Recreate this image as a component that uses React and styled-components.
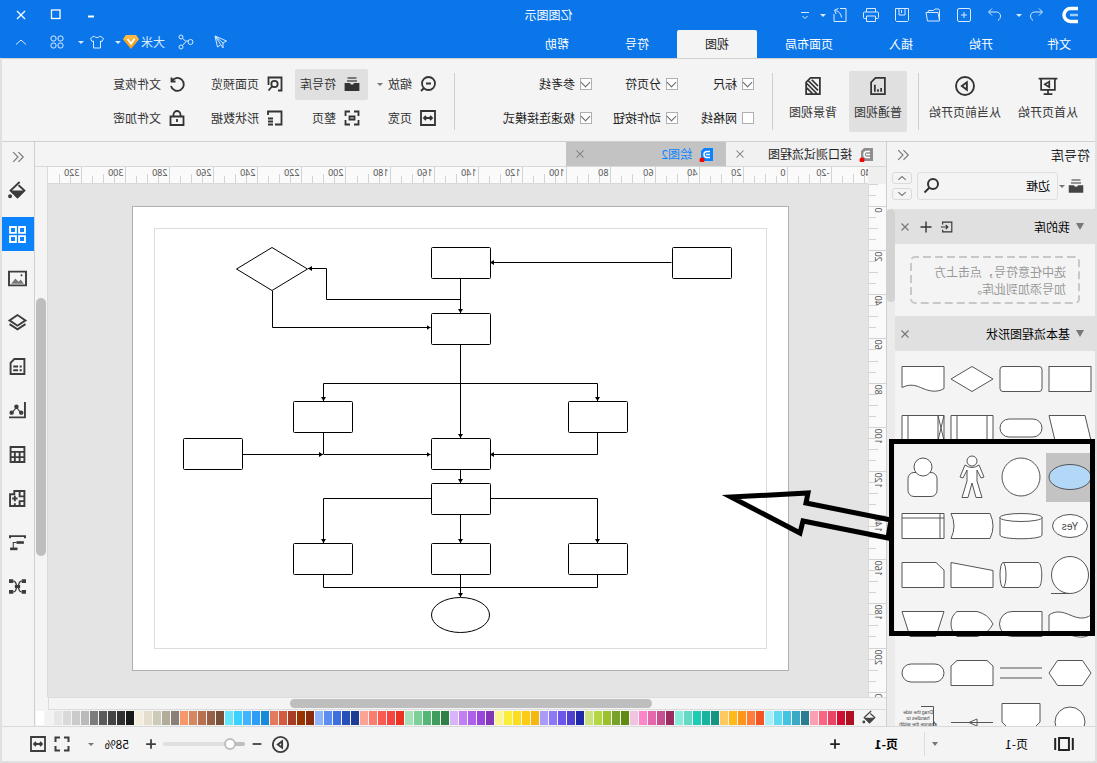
// react
import React from 'react';
// styled-components
import styled, { createGlobalStyle, css } from 'styled-components';

const GlobalStyle = createGlobalStyle`
  * {
    box-sizing: border-box;
  }
  body {
    margin: 0;
    overflow: hidden;
    background: #f4f4f4;
  }
  body, button, input, select {
    font-family: 'Liberation Sans', 'Noto Sans CJK SC', sans-serif;
    font-size: 12px;
    line-height: 16px;
    color: #222;
  }
  button {
    padding: 0;
    border: 0;
    background: none;
    cursor: pointer;
  }
`;

/* ---------- shell ---------- */

// the whole window is shown reversed left to right
const Window = styled.div`
  display: flex;
  flex-direction: column;
  width: 100%;
  height: 100vh;
  transform: scaleX(-1);
  font-family: 'Noto Sans CJK SC', sans-serif;
  button, input, select {
    font-family: 'Noto Sans CJK SC', sans-serif;
  }
`;

const Frame = styled.div`
  display: flex;
  flex-direction: column;
  flex: 1;
  min-height: 0;
  border: 2px solid #e0e0e0;
  border-top: 0;
  background: #f4f4f4;
`;

const Main = styled.main`
  display: flex;
  flex: 1;
  min-height: 0;
`;

/* ---------- icons ---------- */

const Svg = styled.svg`
  display: block;
  flex: none;
  fill: none;
  stroke: currentColor;
  stroke-width: ${p => p.$weight};
`;

const icons = {
  undo: <path d="M5 1.5L1.5 5 5 8.500M2 5H9.500C12 5 13.500 7 13.500 9S12.500 12.500 11 13.500" />,
  redo: <path d="M11 1.500L14.500 5 11 8.500M14 5H6.500C4 5 2.500 7 2.500 9S3.500 12.500 5 13.500" />,
  add: <path d="M3 1.500H13A1.500 1.500 0 0 1 14.500 3V13A1.500 1.500 0 0 1 13 14.500H3A1.500 1.500 0 0 1 1.500 13V3A1.500 1.500 0 0 1 3 1.500ZM8 5V11M5 8H11" />,
  open: <path d="M1.500 14V3.500Q1.500 2 3 2H6L7.500 3.500H12Q13 3.500 13 5M1.500 13.500L3 5.500H15L13.500 14H2Q1.500 14 1.500 13.500Z" />,
  save: <path d="M1.500 1.500H14.500V13.500L13.500 14.500H2.500L1.500 13.500ZM5 1.500V8H11V1.500M8.500 3V6" />,
  print: <path d="M3.500 5V1.500H12.500V5M3.500 11.500H1.500Q.5 11.500.5 10.500V6Q.5 5 1.500 5H14.500Q15.500 5 15.500 6V10.500Q15.500 11.500 14.500 11.500H12.500M3.500 9H12.500V14.500H3.500Z" />,
  export: <path d="M8 1.500H2V14.500H14V7M6.500 10.500Q7 5 12.500 3.500M9.500 1.500L13.500 3 12 7" />,
  more: <path d="M4 5.500H12M5.500 9L8 11.500 10.500 9" />,
  send: <path d="M14 2L2.500 7 6 9 14 2 11.500 13 8.500 11M6 9V14L14 2" />,
  share: <g><circle cx="3.500" cy="8" r="2.500" /><circle cx="13" cy="3" r="2" /><circle cx="13" cy="13" r="2" /><path d="M6 7H8.500L11.500 4.500M8 7.500L11.500 11.500" /></g>,
  shirt: <path d="M5 2L1.500 4.500 3 7.500 4.500 7V14H11.500V7L13 7.500 14.500 4.500 11 2C10 4 6 4 5 2Z" />,
  apps: <g><rect x="2" y="2" width="5" height="5" rx="2" /><rect x="9" y="2" width="5" height="5" rx="2" /><rect x="2" y="9" width="5" height="5" rx="2" /><rect x="9" y="9" width="5" height="5" rx="2" /></g>,
  up: <path d="M3 10.500L8 6 13 10.500" />,
  down: <path d="M3 5.500L8 10 13 5.500" />,
  min: <path d="M5 9.500H11" strokeWidth="2" />,
  max: <rect x="4" y="3" width="8.500" height="8.500" />,
  close: <path d="M4 4L12 12M12 4L4 12" />,
  present: <path d="M.5 2H15.500M2.500 2V11H13.500V2M8 11V14M4.500 14.500H11.500M7 4.500L10.500 6.700 7 9Z" />,
  play: <g><circle cx="8" cy="8" r="7.200" /><path d="M6.500 5L10.500 8 6.500 11Z" /></g>,
  chartPage: <path d="M2.500 1.500H10L13.500 5V14.500H2.500ZM5.500 12.500V9.500M8 12.500V10.500M10.500 12.500V7" />,
  hatchPage: <path d="M2.500 1.500H10L13.500 5V14.500H2.500ZM4 8L9 3M4 11.500L11.500 4M5 14L13 6M8.500 14L13 9.500" />,
  zoom: <g><circle cx="7.500" cy="7.500" r="6.500" /><path d="M12 12L15 15M5 7.500H10" /></g>,
  fit: <path d="M1 1H15V15H1ZM4 8H12M6 6L4 8 6 10M10 6L12 8 10 10" />,
  inbox: <g><path d="M3.500 2H12.500M3 5H13" stroke="#777" /><path d="M1.500 8H5.500Q6 9.500 8 9.500T10.500 8H14.500V14H1.500Z" fill="currentColor" /></g>,
  whole: <path d="M6 1.500H1.500V6M10 1.500H14.500V6M1.500 10V14.500H6M14.500 10V14.500H10M5.500 6.500H10.500V9.500H5.500Z" />,
  preview: <g><circle cx="8.500" cy="8" r="3.200" /><path d="M11 10.500L14.500 14.500M5 14.500H1.500V1.500H14.500V9" /></g>,
  data: <path d="M1.500 9V1.500H15V5M1.500 8V14.500H8M10 8.500H15M10 11.500H15M10 14.500H15" />,
  restore: <path d="M13.500 1.500V5.500H9.500M13.500 5.500A6.500 6.500 0 1 0 14 10" />,
  lock: <path d="M1.500 6.500H14.500V15H1.500ZM4.500 6.500V4.500A3.500 3.500 0 0 1 11.500 4.500V6.500M8 9V12" />,
  search: <g><circle cx="7" cy="6" r="5" /><path d="M10.500 9.500L15.500 14.500" /></g>,
  import: <path d="M3 5V2.500H13.500V13.500H3V11M1 8H9M6.500 5.500L9 8 6.500 10.500" transform="matrix(-1 0 0 1 16 0)" />,
  plus: <path d="M8 2.500V13.500M2.500 8H13.500" />,
  minus: <path d="M3 8H13" />,
  collapse: <path d="M7.500 2.500L2 8 7.500 13.500M13.500 2.500L8 8 13.500 13.500" />,
  bucket: <g><path d="M7 3L1.500 8 8 14.500 14.500 8 6 0" /><path d="M3 9L8 14 13 9Z" fill="currentColor" /><circle cx="15" cy="13.500" r="1" fill="currentColor" /></g>,
  grid: <path d="M1 1H6.500V6.500H1ZM9.500 1H15V6.500H9.500ZM1 9.500H6.500V15H1ZM9.500 9.500H15V15H9.500Z" />,
  image: <g><path d="M0 1.500H16V14.500H0Z" /><path d="M2 13L5 9 7 11 10 8 14 13Z" fill="#777" stroke="none" /><path d="M3.500 5H5" /></g>,
  layers: <path d="M8 1L15.500 6 8 11 .5 6ZM.5 9.500L8 14.500 15.500 9.500" />,
  doc: <path d="M1.500 1H11L14.500 4.500V15H1.500ZM4 8H6M7.500 8H12M4 11.500H6M7.500 11.500H12" />,
  chart: <g><path d="M1 0V14.500H16" /><path d="M5 10L9 5 13 10" strokeWidth="1" /><circle cx="4.500" cy="10" r="1.200" fill="currentColor" /><circle cx="9" cy="4.500" r="1.200" fill="currentColor" /><circle cx="13.500" cy="10" r="1.200" fill="currentColor" /></g>,
  table: <path d="M1.500 1H14.500V15H1.500ZM1.500 5.500H14.500M1.500 10.500H14.500M6 5.500V15M10.500 5.500V15" />,
  plan: <path d="M1.500 1H11V4H15V15H1.500ZM1.500 6H6V1M10.500 5.500V10.500M8 8H13M1.500 10.500H6V15M10.500 15V12.500" />,
  gantt: <g><path d="M0 2H16M1 2V4M15 2V4" /><path d="M2 8H9" strokeWidth="2.500" /><path d="M8 14H15" strokeWidth="2.500" /><path d="M9 8H12V14" strokeWidth="1" /></g>,
  mind: <g><path d="M4 3C8 3 6 8 8 8S8 13 12 13M12 3C8 3 10 8 8 8S8 13 4 13" strokeWidth="1.200" /><path d="M0 3H4M12 3H16M0 13H4M12 13H16" strokeWidth="3.500" /><path d="M5.500 8H10.500" strokeWidth="3" /></g>,
  pages: <path d="M4.500 2.500H13.500V13.500H4.500ZM1 2.500V13.500M17 2.500V13.500" />,
  full: <path d="M6 1.500H1.500V6M10 1.500H14.500V6M1.500 10V14.500H6M14.500 10V14.500H10" />
};

const Icon = ({ name, size = 16, weight = 1, wide }) => (
  <Svg
    width={wide ? size + 4 : size}
    height={size}
    viewBox={wide ? '-1 0 20 16' : '0 0 16 16'}
    $weight={weight}
    overflow="visible"
    aria-hidden="true"
  >
    {icons[name]}
  </Svg>
);

const Caret = styled.i`
  display: block;
  flex: none;
  width: 0;
  height: 0;
  border: 3px solid transparent;
  border-top-color: ${p => p.$color || '#777'};
  border-bottom: 0;
`;

/* ---------- title bar ---------- */

const Header = styled.header`
  flex: none;
  height: 58px;
  background: #0a76ea;
  color: #fff;
`;

const TitleRow = styled.div`
  display: grid;
  grid-template-columns: 1fr auto 1fr;
  align-items: center;
  height: 30px;
  padding: 0 13px;
`;

const Title = styled.h1`
  margin: 0;
  font-size: 12px;
  font-weight: 400;
`;

const QuickBar = styled.div`
  display: flex;
  align-items: center;
  gap: 15px;
  padding-left: 5px;
`;

const QuickButton = styled.button`
  display: flex;
  align-items: center;
  gap: 6px;
  margin-right: ${p => (p.$tight ? `-${p.$tight}px` : '0')};
  color: #d9eaff;
`;

const WindowButtons = styled.div`
  display: flex;
  justify-content: flex-end;
  gap: 19px;
  button {
    color: #fff;
  }
`;

const MenuRow = styled.div`
  display: flex;
  justify-content: space-between;
  height: 28px;
`;

const Menu = styled.nav`
  display: flex;
`;

const MenuTab = styled.button`
  padding: 0 ${p => (p.$first ? '26px' : '28px')};
  border-radius: 2px 2px 0 0;
  color: ${p => (p.$active ? '#222' : '#fff')};
  background: ${p => (p.$active ? '#f4f4f4' : 'transparent')};
`;

const AccountBar = styled.div`
  display: flex;
  align-items: center;
  padding: 0 13px 4px 0;
  button {
    display: flex;
    align-items: center;
    color: #d9eaff;
  }
`;

const AccountButton = styled.button`
  gap: ${p => p.$gap || 5}px;
  margin-left: ${p => p.$space}px;
`;

const Logo = () => (
  <svg width="20" height="18" viewBox="0 0 20 18" fill="none" aria-hidden="true">
    <path d="M1 2.500H8.500A6.500 6.500 0 0 1 8.500 15.500H1" stroke="#fff" strokeWidth="3.500" />
    <path d="M1 9H9" stroke="#9fccff" strokeWidth="2.500" />
  </svg>
);

const Gem = () => (
  <svg width="16" height="14" viewBox="0 0 16 14" fill="none" aria-hidden="true">
    <path d="M3 0H13L16 4.500 8 14 0 4.500Z" fill="#f5a623" />
    <path d="M3 0H13L16 4.500H0Z" fill="#fbb945" />
    <path d="M4.500 4L8 8.500 11.500 4" stroke="#fff" strokeWidth="2" />
  </svg>
);

/* ---------- ribbon ---------- */

const Ribbon = styled.section`
  display: flex;
  flex: none;
  align-items: center;
  height: 84px;
  padding: 2px 0 0 12px;
  border-top: 1px solid #d0d0d0;
  border-bottom: 1px solid #d0d0d0;
`;

const Divider = styled.div`
  width: 1px;
  height: 57px;
  margin: 0 ${p => p.$right}px 0 ${p => p.$left}px;
  background: #cfcfcf;
`;

const BigGroup = styled.div`
  display: flex;
  gap: 7px;
`;

const BigButton = styled.button`
  display: flex;
  flex-direction: column;
  align-items: center;
  gap: 8px;
  height: 61px;
  padding: 5px 5px 0;
  border-radius: 2px;
  white-space: nowrap;
  color: #333;
  background: ${p => (p.$active ? '#e0e0e0' : 'transparent')};
`;

const CheckGrid = styled.div`
  display: grid;
  grid-template-columns: 76px 86px 136px;
  grid-auto-rows: 31px;
  gap: 3px 0;
`;

const CheckLabel = styled.label`
  display: flex;
  align-items: center;
  gap: 5px;
`;

const CheckBox = styled.input.attrs({ type: 'checkbox' })`
  appearance: none;
  display: flex;
  justify-content: center;
  width: 12px;
  height: 12px;
  margin: 0;
  border: 1px solid #b0b0b0;
  background: #fff;
  &:checked::after {
    content: '';
    width: 6px;
    height: 6px;
    border: solid #666;
    border-width: 0 1px 1px 0;
    transform: rotate(45deg);
  }
`;

const ToolGrid = styled.div`
  display: grid;
  grid-template-columns: 76px 77px 98px auto;
  grid-auto-rows: 31px;
  gap: 3px 0;
  justify-items: start;
`;

const ToolButton = styled.button`
  display: flex;
  align-items: center;
  gap: 8px;
  padding: 0 5px 0 8px;
  border-radius: 2px;
  white-space: nowrap;
  color: #333;
  background: ${p => (p.$active ? '#e0e0e0' : 'transparent')};
  i {
    margin-left: -3px;
  }
`;

const checks = [
  ['标尺', true], ['分页符', true], ['参考线', true],
  ['网格线', false], ['动作按钮', true], ['极速连接模式', true]
];

const tools = [
  ['zoom', '缩放'], ['inbox', '符号库'], ['preview', '页面预览'], ['restore', '文件恢复'],
  ['fit', '页宽'], ['whole', '整页'], ['data', '形状数据'], ['lock', '文件加密']
];

/* ---------- symbol panel ---------- */

const Panel = styled.aside`
  position: relative;
  display: flex;
  flex: none;
  flex-direction: column;
  width: 209px;
  border-right: 1px solid #cfcfcf;
`;

const PanelHead = styled.div`
  display: flex;
  flex: none;
  align-items: center;
  justify-content: space-between;
  height: 25px;
  padding: 0 9px 0 5px;
  font-size: 13px;
  button {
    color: #777;
  }
`;

const SearchRow = styled.div`
  display: flex;
  flex: none;
  align-items: center;
  height: 28px;
  margin: 5px 5px 9px 11px;
`;

const SearchBox = styled.label`
  display: flex;
  flex: 1;
  align-items: center;
  height: 28px;
  margin: 0 5px 0 1px;
  padding: 0 6px 0 7px;
  border: 1px solid #dedede;
  border-radius: 3px;
  color: #333;
  input {
    flex: 1;
    width: 60px;
    padding: 0;
    border: 0;
    outline: 0;
    background: none;
    color: #000;
  }
`;

const LibraryButton = styled.button`
  display: flex;
  align-items: center;
  gap: 3px;
  color: #444;
`;

const Stepper = styled.div`
  display: grid;
  gap: 4px;
  button {
    display: flex;
    align-items: center;
    justify-content: center;
    width: 20px;
    height: 12px;
    border: 1px solid #dadada;
    border-radius: 3px;
    color: #777;
  }
`;

const PanelBody = styled.div`
  display: flex;
  flex: 1;
  min-height: 0;
`;

const PanelContent = styled.div`
  flex: 1;
  overflow: hidden;
`;

const PanelTrack = styled.div`
  width: 8px;
  background: #ebebeb;
  &::before {
    content: '';
    display: block;
    height: 18%;
    border-radius: 4px;
    background: #d3d3d3;
  }
`;

const SectionHead = styled.div`
  display: flex;
  align-items: center;
  gap: 6px;
  height: 35px;
  padding: 0 3px 0 11px;
  background: #e0e0e0;
  h2 {
    flex: 1;
    margin: 0;
    font-size: 12px;
    font-weight: 400;
    color: #000;
  }
`;

const SectionCaret = styled(Caret)`
  border-width: 7px 4px 0;
`;

const SectionButton = styled.button`
  color: ${p => p.$color};
`;

const DropZone = styled.p`
  display: flex;
  align-items: center;
  height: 48px;
  margin: 12px 15px;
  color: #999;
  line-height: 17px;
  position: relative;
  span {
    padding: 0 14px;
  }
  svg {
    position: absolute;
    inset: 0;
  }
`;

const ShapeGrid = styled.div`
  display: grid;
  grid-template-columns: repeat(4, 49px);
  padding-top: 4px;
`;

const ShapeButton = styled.button`
  width: 49px;
  height: 49px;
  background: ${p => (p.$active ? '#c3c3c3' : 'transparent')};
  svg {
    display: block;
    fill: ${p => (p.$active ? '#b3d7f7' : '#fff')};
    stroke: #555;
  }
  text {
    fill: #444;
    stroke: none;
    text-anchor: middle;
    font-family: 'Liberation Sans', sans-serif;
    font-size: ${p => p.$font || 10}px;
  }
`;

const Marker = styled.svg`
  position: absolute;
  z-index: 2;
  top: 297px;
  left: 0;
  overflow: visible;
  pointer-events: none;
  fill: none;
  stroke: #000;
  stroke-width: 5;
`;

const shapes = [
  ['process', <rect x="-21" y="-12.500" width="42" height="25" />],
  ['rounded process', <rect x="-21" y="-12.500" width="42" height="25" rx="3" />],
  ['decision', <path d="M0-12.500L21 0 0 12.500-21 0Z" />],
  ['document', <path d="M-21-12.500H21V8.500C12 4 6 7 0 9.500S-14 14-21 9.500Z" />],
  ['data', <path d="M-15-12.500H21L15 12.500H-21Z" />],
  ['terminator', <rect x="-21" y="-9" width="42" height="18" rx="9" />],
  ['predefined process', <path d="M-21-12.500H21V12.500H-21ZM-15-12.500V12.500M15-12.500V12.500" />],
  ['crossed process', <path d="M-21-12.500H21V12.500H-21ZM-15-12.500V12.500M15-12.500V12.500M-21-12.500L-15 12.500M-15-12.500L-21 12.500" />],
  ['ellipse', <ellipse rx="21" ry="12.500" />],
  ['circle', <circle r="19" />],
  ['person', <g><circle cy="-16" r="5" /><path d="M-7-12Q0-7 7-12L12 0 9 1 5-7V4L10 20.500H4L0 6-4 20.500H-10L-5 4V-7L-9 1-12 0Z" /></g>],
  ['user', <g><rect x="-14" y="-4.500" width="29" height="24" rx="6" /><circle cy="-10" r="9" /></g>],
  ['yes', <g><ellipse rx="17.500" ry="11.500" /><text y="4">Yes</text></g>],
  ['database', <g><path d="M-21-9V9C-21 14 21 14 21 9V-9" /><ellipse cy="-8.500" rx="21" ry="4" /></g>],
  ['stored data', <path d="M-18-12.500H21Q15 0 21 12.500H-18Q-24 0-18-12.500Z" />],
  ['internal storage', <path d="M-21-12.500H21V12.500H-21ZM-17-12.500V12.500M-21-8H21" />],
  ['sequential data', <g><circle r="18.500" /><path d="M0 18.500H19" /></g>],
  ['direct data', <g><path d="M18-12.500H-17C-22-12.500-22 12.500-17 12.500H18" /><ellipse cx="18" rx="3" ry="12.500" /></g>],
  ['manual input', <path d="M21-12.500V12.500H-21V-4.500Z" />],
  ['card', <path d="M-13-12.500H21V12.500H-21V-5Z" />],
  ['paper tape', <path d="M-21-9C-14-4-7-6 0-9S14-14 21-9V10C14 5 7 9 0 11S-14 15-21 10Z" />],
  ['delay', <path d="M-21-12.500H9A12.500 12.500 0 0 1 9 12.500H-21Z" />],
  ['display', <path d="M15-12.500H-5Q-16-10-21 0-16 10-5 12.500H15Q21 8 21 0T15-12.500Z" />],
  ['manual operation', <path d="M-21-12.500H21L13 12.500H-13Z" />],
  ['preparation', <path d="M-21 0L-12.500-12.500H12.500L21 0 12.500 12.500H-12.500Z" />],
  ['parallel mode', <path d="M-21-5H21M-21 5H21" />],
  ['loop limit', <path d="M-21-7L-15-12.500H15L21-7V12.500H-21Z" />],
  ['end', <rect x="-21" y="-9" width="42" height="18" rx="9" />],
  ['connector', <circle r="15" />],
  ['off page', <path d="M-19-18.500H19V0L14 5H-14L-19 0Z" />],
  ['flow line', <path d="M-21 .5H21M-5-3L3 .5-5 4Z" />],
  ['note', <g><path d="M2-15.500H-10.500V5M-10.500-1L-13 3" fill="none" /><text x="5" y="-8">Drag the side</text><text x="5" y="-2">handles to</text><text x="5" y="4">change the width</text></g>]
];

/* ---------- workspace ---------- */

const Workspace = styled.section`
  display: flex;
  flex: 1;
  flex-direction: column;
  min-width: 0;
`;

const TabBar = styled.div`
  display: flex;
  flex: none;
  height: 25px;
  border-bottom: 1px solid #d9d9d9;
`;

const DocTab = styled.div`
  display: flex;
  align-items: center;
  width: 160px;
  padding: 0 7px 0 13px;
  background: ${p => (p.$active ? '#c3c3c3' : '#f1f1f1')};
  color: ${p => (p.$active ? '#0a83ff' : '#222')};
  span {
    flex: 1;
    padding-left: 7px;
  }
  button {
    color: #777;
  }
`;

const DocIcon = ({ color }) => (
  <svg width="14" height="16" viewBox="0 0 14 16" fill="none" aria-hidden="true">
    <path d="M0 2H9L12 5V15H0Z" fill={color} />
    <path d="M3 5.500H6A3 3 0 0 1 6 11.500H3M3 8.500H7" stroke="#fff" strokeWidth="1.500" />
    <circle cx="11" cy="14" r="2.500" fill="#f00" />
  </svg>
);

const Board = styled.div`
  display: grid;
  flex: 1;
  grid-template-columns: 18px 1fr 13px;
  grid-template-rows: 17px 1fr 13px;
  min-height: 0;
`;

const Corner = styled.div`
  background: #efefef;
`;

const Ruler = styled.div`
  overflow: hidden;
  background: #fafafa;
  border: solid #d9d9d9;
  border-width: ${p => (p.$vertical ? '0 1px 0 0' : '0 0 1px 0')};
  svg {
    display: block;
    width: 100%;
    height: 100%;
  }
  text {
    fill: #555;
    font-family: 'Noto Sans', sans-serif;
    font-size: 9px;
  }
`;

const Canvas = styled.div`
  overflow: hidden;
  padding: 22px 0 0 79px;
  background: #e4e4e4;
`;

const Page = styled.div`
  width: 657px;
  height: 465px;
  border: 1px solid #b0b0b0;
  background: #fff;
  svg {
    display: block;
    margin: -1px;
  }
`;

const thumb = css`
  content: '';
  border-radius: 5px;
  background: #bebebe;
`;

const VScroll = styled.div`
  display: grid;
  grid-row: 1 / 3;
  grid-column: 3;
  grid-template-rows: 131fr 258fr 141fr;
  padding: 0 1px;
  border-left: 1px solid #d9d9d9;
  &::before {
    ${thumb}
    grid-row: 2;
  }
`;

const HScroll = styled.div`
  display: grid;
  grid-row: 3;
  grid-column: 1 / 3;
  grid-template-columns: 234fr 363fr 241fr;
  padding: 1px 0;
  border: 1px solid #dcdcdc;
  border-left: 0;
  &::before {
    ${thumb}
    grid-column: 2;
  }
`;

const Palette = styled.div`
  display: flex;
  flex: none;
  gap: 1px;
  height: 16px;
  padding: 1px 0 1px 9px;
  overflow: hidden;
`;

const FillButton = styled.button`
  display: flex;
  flex: none;
  justify-content: center;
  width: 14px;
  margin-right: 8px;
  color: #444;
`;

const Swatch = styled.button`
  flex: none;
  width: 8px;
  height: 14px;
  background: ${p => p.$color};
`;

const palette = `
  #ad1020 #d00d32 #eb4565 #f96684 #fb9fb3
  #2a7d91 #3aa9c5 #43c3e2 #5fdaf0 #a6f0fc
  #f55425 #ff7d36 #ff951b #ffba18 #ffc860
  #139582 #18b49f #1bcdb4 #66d8c6 #86ecdc
  #9c2b60 #c94f93 #e668ac #fb87c8 #f0c3de
  #618a12 #76a22a #9cc029 #b5d643 #cbe07e
  #2027a8 #5040d0 #6b55ea #8c78f7 #a99bf8
  #f5b80c #fccb17 #fbdd1b #fbee3b #fdf68f
  #8337b8 #9a45dc #ad60ea #c07ff3 #dab4f8
  #2f8048 #3f9c5b #55b775 #7ccf97 #a5e0b9
  #ea3323 #f64540 #f95a52 #fb7d70 #fba394
  #1d3c94 #2950b8 #3f6fde #5e8df2 #8fb4fb
  #8c2a10 #983300 #a83c24 #d35c40 #e37a5e
  #178bd8 #2e9ef4 #40b4ff #3cd0ff #66e5ff
  #7a4f38 #956043 #b97051 #d68760 #f6976c
  #8b7f77 #b2ac9b #cdc9b8 #e5dece #f5eedc
  #191919 #303030 #444444 #5a5a5a #7c7c7c #bababa
  #cbcbcb #d9d9d9 #e6e6e6 #f2f2f2 #ffffff
`.trim().split(/\s+/);

// pixels per ruler unit, with a mark every five units
const SCALE = 2.2075;
const marks = (from, to) => {
  const list = [];
  for (let v = from; v <= to; v += 5) list.push(v);
  return list;
};

const tickSize = (v, full) => {
  if (v % 20 === 0) return full;
  return v % 10 === 0 ? 9 : 7;
};

const HorizontalRuler = () => (
  <Ruler>
    <svg>
      {marks(-40, 335).map(v => {
        const x = Math.round(80 + v * SCALE) + 0.5;
        return (
          <g key={v}>
            <path d={`M${x} 16V${16 - tickSize(v, 16)}`} stroke="#d3d3d3" />
            {v % 20 === 0 ? <text x={x + 2} y="9">{v}</text> : null}
          </g>
        );
      })}
    </svg>
  </Ruler>
);

const VerticalRuler = () => (
  <Ruler $vertical>
    <svg>
      {marks(-10, 220).map(v => {
        const y = Math.round(22 + v * SCALE) + 0.5;
        return (
          <g key={v}>
            <path d={`M17 ${y}H${17 - tickSize(v, 17)}`} stroke="#d3d3d3" />
            {v % 20 === 0 ? (
              <text transform={`translate(11 ${y + 1}) rotate(-90)`} textAnchor="end">{v}</text>
            ) : null}
          </g>
        );
      })}
    </svg>
  </Ruler>
);

const boxes = [
  [58, 41], [299, 41], [299, 107], [162, 195], [437, 195], [299, 232],
  [547, 232], [299, 277], [162, 337], [299, 337], [437, 337]
];

const links = [
  'M117.500 56.500H299', 'M328.500 72V107', 'M328.500 93.500H462.500V62.500H481',
  'M516.500 85V121.500H358.500', 'M328.500 139V232', 'M328.500 177.500H191.500V195',
  'M328.500 177.500H465.500V195', 'M191.500 227V248.500H299', 'M547 248.500H466',
  'M465.500 248.500H358.500', 'M328.500 263V277', 'M299 292.500H191.500V337',
  'M358 292.500H465.500V337', 'M328.500 308V337', 'M328.500 369V391'
];

const Flowchart = () => (
  <svg width="657" height="465" viewBox="0 0 657 465" fill="none" stroke="#000">
    <defs>
      <marker id="arrow" markerWidth="5" markerHeight="6" refX="4" refY="3" orient="auto" markerUnits="userSpaceOnUse">
        <path d="M0 .5L4 3 0 5.500Z" fill="#000" stroke="none" />
      </marker>
    </defs>
    <rect x="22.500" y="22.500" width="612" height="420" stroke="#dcdcdc" />
    {links.map(d => <path key={d} d={d} markerEnd="url(#arrow)" />)}
    <path d="M465.500 227V248M191.500 369V381.500H465.500V369" />
    {boxes.map(([x, y]) => (
      <rect key={`${x}-${y}`} x={x - 0.5} y={y + 0.5} width="59" height="31" rx="1" fill="#fff" />
    ))}
    <path d="M517 41.500L552.500 63 517 84.500 481.500 63Z" />
    <ellipse cx="328.500" cy="409" rx="29" ry="17.500" />
  </svg>
);

/* ---------- right strip ---------- */

const Strip = styled.nav`
  display: flex;
  flex: none;
  flex-direction: column;
  gap: 10px;
  width: 33px;
  border-left: 1px solid #cfcfcf;
`;

const StripButton = styled.button`
  display: flex;
  flex: none;
  align-items: center;
  justify-content: center;
  height: ${p => (p.$head ? '21px' : '34px')};
  padding-top: ${p => (p.$head ? '9px' : '0')};
  color: ${p => (p.$active ? '#fff' : p.$head ? '#777' : '#3c3c3c')};
  background: ${p => (p.$active ? '#0a83ff' : 'transparent')};
`;

const stripTools = ['bucket', 'grid', 'image', 'layers', 'doc', 'chart', 'table', 'plan', 'gantt', 'mind'];

/* ---------- status bar ---------- */

const StatusBar = styled.footer`
  display: flex;
  flex: none;
  align-items: center;
  justify-content: space-between;
  height: 35px;
  padding: 0 28px 0 20px;
  border-top: 1px solid #d9d9d9;
`;

const PageBar = styled.div`
  display: flex;
  align-items: center;
`;

const Picker = styled.label`
  display: flex;
  align-items: center;
  margin-left: ${p => p.$space}px;
  select {
    appearance: none;
    width: ${p => p.$width}px;
    padding: 0;
    border: 0;
    background: none;
    color: #000;
  }
`;

const PageCaret = styled(Caret)`
  border-width: 4px 3px 0;
`;

const PageDivider = styled.div`
  width: 1px;
  height: 24px;
  margin-left: 7px;
  background: #dcdcdc;
`;

const PageButton = styled.button`
  margin: 0 32px 0 26px;
  font-weight: 700;
  color: #000;
`;

const ViewBar = styled.div`
  display: flex;
  align-items: center;
  color: #3c3c3c;
  button {
    color: #3c3c3c;
  }
`;

const Spaced = styled.button`
  margin-left: ${p => p.$space}px;
`;

const Slider = styled.input.attrs({ type: 'range' })`
  appearance: none;
  width: 82px;
  height: 4px;
  margin: 0 5px;
  border-radius: 2px;
  background: linear-gradient(to right, #bebebe 18%, #e0e0e0 18%);
  &::-webkit-slider-thumb {
    appearance: none;
    width: 12px;
    height: 12px;
    border: 2px solid #bebebe;
    border-radius: 50%;
    background: #fff;
  }
`;

const App = () => (
  <Window>
    <GlobalStyle />
    <Header>
      <TitleRow>
        <QuickBar>
          <Logo />
          <QuickButton $tight={2} aria-label="undo"><Icon name="undo" /><Caret $color="#d9eaff" /></QuickButton>
          {['redo', 'add', 'open', 'save', 'print'].map(i => (
            <QuickButton key={i} aria-label={i}><Icon name={i} /></QuickButton>
          ))}
          <QuickButton $tight={8} aria-label="export"><Icon name="export" /><Caret $color="#d9eaff" /></QuickButton>
          <QuickButton aria-label="more"><Icon name="more" /></QuickButton>
        </QuickBar>
        <Title>亿图图示</Title>
        <WindowButtons>
          {['min', 'max', 'close'].map(i => (
            <button key={i} aria-label={i}><Icon name={i} weight={1.3} /></button>
          ))}
        </WindowButtons>
      </TitleRow>
      <MenuRow>
        <Menu>
          {['文件', '开始', '插入', '页面布局', '视图', '符号', '帮助'].map((i, n) => (
            <MenuTab key={i} $first={n === 0} $active={i === '视图'}>{i}</MenuTab>
          ))}
        </Menu>
        <AccountBar>
          <AccountButton $space={0} aria-label="send"><Icon name="send" /></AccountButton>
          <AccountButton $space={19} aria-label="share"><Icon name="share" /></AccountButton>
          <AccountButton $space={13} $gap={2}>大米<Gem /><Caret $color="#d9eaff" /></AccountButton>
          <AccountButton $space={10} aria-label="skin"><Icon name="shirt" /><Caret $color="#d9eaff" /></AccountButton>
          <AccountButton $space={13} aria-label="apps"><Icon name="apps" /></AccountButton>
          <AccountButton $space={20} aria-label="fold"><Icon name="up" /></AccountButton>
        </AccountBar>
      </MenuRow>
    </Header>
    <Frame>
      <Ribbon>
        <BigGroup>
          <BigButton><Icon name="present" size={20} weight={1.4} />从首页开始</BigButton>
          <BigButton><Icon name="play" size={20} weight={1.5} />从当前页开始</BigButton>
        </BigGroup>
        <Divider $left={5} $right={11} />
        <BigGroup>
          <BigButton $active><Icon name="chartPage" size={20} weight={1.4} />普通视图</BigButton>
          <BigButton><Icon name="hatchPage" size={20} weight={1.4} />背景视图</BigButton>
        </BigGroup>
        <Divider $left={11} $right={18} />
        <CheckGrid>
          {checks.map(([label, on]) => (
            <CheckLabel key={label}>
              <CheckBox defaultChecked={on} />
              {label}
            </CheckLabel>
          ))}
        </CheckGrid>
        <Divider $left={1} $right={10} />
        <ToolGrid>
          {tools.map(([icon, label]) => (
            <ToolButton key={label} $active={icon === 'inbox'}>
              <Icon name={icon} weight={1.8} />
              {label}
              {icon === 'zoom' ? <Caret /> : null}
            </ToolButton>
          ))}
        </ToolGrid>
      </Ribbon>
      <Main>
        <Panel>
          <PanelHead>
            符号库
            <button aria-label="collapse"><Icon name="collapse" size={14} weight={1.3} /></button>
          </PanelHead>
          <SearchRow>
            <LibraryButton aria-label="library"><Icon name="inbox" weight={1.5} /><Caret /></LibraryButton>
            <SearchBox>
              <input type="text" defaultValue="边框" aria-label="search" />
              <Icon name="search" weight={2} />
            </SearchBox>
            <Stepper>
              <button aria-label="previous"><Icon name="up" size={12} weight={1.5} /></button>
              <button aria-label="next"><Icon name="down" size={12} weight={1.5} /></button>
            </Stepper>
          </SearchRow>
          <PanelBody>
            <PanelContent>
              <SectionHead>
                <SectionCaret />
                <h2>我的库</h2>
                <SectionButton $color="#333" aria-label="import"><Icon name="import" size={14} weight={1.3} /></SectionButton>
                <SectionButton $color="#333" aria-label="add"><Icon name="plus" weight={1.4} /></SectionButton>
                <SectionButton $color="#777" aria-label="close"><Icon name="close" size={14} weight={1.4} /></SectionButton>
              </SectionHead>
              <DropZone>
                <svg width="170" height="48" fill="none" aria-hidden="true">
                  <rect x="1" y="1" width="168" height="46" rx="4" stroke="#c8c8c8" strokeWidth="2" strokeDasharray="8 4" />
                </svg>
                <span>选中任意符号，点击上方加号添加到此库。</span>
              </DropZone>
              <SectionHead>
                <SectionCaret />
                <h2>基本流程图形状</h2>
                <SectionButton $color="#777" aria-label="close"><Icon name="close" size={14} weight={1.4} /></SectionButton>
              </SectionHead>
              <ShapeGrid>
                {shapes.map(([name, shape]) => (
                  <ShapeButton
                    key={name}
                    aria-label={name}
                    $active={name === 'ellipse'}
                    $font={name === 'note' ? 5 : 10}
                  >
                    <svg width="49" height="49" viewBox="-25 -24 49 49">{shape}</svg>
                  </ShapeButton>
                ))}
              </ShapeGrid>
            </PanelContent>
            <PanelTrack />
          </PanelBody>
          <Marker width="208" height="198" viewBox="0 0 208 198">
            <rect x="2.500" y="2.500" width="201" height="192" />
            <path d="M364 58L287 54 289 64 204 81 207 99 292 82 295 94Z" strokeMiterlimit="8" />
          </Marker>
        </Panel>
        <Workspace>
          <TabBar>
            <DocTab>
              <DocIcon color="#8f8f8f" />
              <span>接口测试流程图</span>
              <button aria-label="close"><Icon name="close" size={14} weight={1.2} /></button>
            </DocTab>
            <DocTab $active>
              <DocIcon color="#0a83ff" />
              <span>绘图2</span>
              <button aria-label="close"><Icon name="close" size={14} weight={1.2} /></button>
            </DocTab>
          </TabBar>
          <Board>
            <Corner />
            <HorizontalRuler />
            <VScroll />
            <VerticalRuler />
            <Canvas>
              <Page><Flowchart /></Page>
            </Canvas>
            <HScroll />
          </Board>
          <Palette>
            <FillButton aria-label="fill"><Icon name="bucket" size={13} weight={1.5} /></FillButton>
            {palette.map((c, n) => <Swatch key={n} $color={c} aria-label={c} />)}
          </Palette>
        </Workspace>
        <Strip>
          <StripButton $head aria-label="expand"><Icon name="collapse" size={14} weight={1.3} /></StripButton>
          {stripTools.map(i => (
            <StripButton key={i} $active={i === 'grid'} aria-label={i}>
              <Icon name={i} size={17} weight={1.8} />
            </StripButton>
          ))}
        </Strip>
      </Main>
      <StatusBar>
        <PageBar>
          <Icon name="pages" size={18} weight={1.8} wide />
          <Picker $width={90} $space={25}>
            <select aria-label="page"><option>页-1</option></select>
            <PageCaret />
          </Picker>
          <PageDivider />
          <PageButton>页-1</PageButton>
          <button aria-label="add page"><Icon name="plus" size={14} weight={2} /></button>
        </PageBar>
        <ViewBar>
          <button aria-label="play"><Icon name="play" size={17} weight={1.8} /></button>
          <Spaced $space={8} aria-label="zoom out"><Icon name="minus" size={14} weight={2} /></Spaced>
          <Slider defaultValue={13} aria-label="zoom" />
          <button aria-label="zoom in"><Icon name="plus" size={14} weight={2} /></button>
          <Picker $width={35} $space={15}>
            <select aria-label="zoom level"><option>58%</option></select>
            <Caret />
          </Picker>
          <Spaced $space={18} aria-label="full screen"><Icon name="full" weight={2} /></Spaced>
          <Spaced $space={8} aria-label="fit width"><Icon name="fit" weight={1.8} /></Spaced>
        </ViewBar>
      </StatusBar>
    </Frame>
  </Window>
);

export default App;
